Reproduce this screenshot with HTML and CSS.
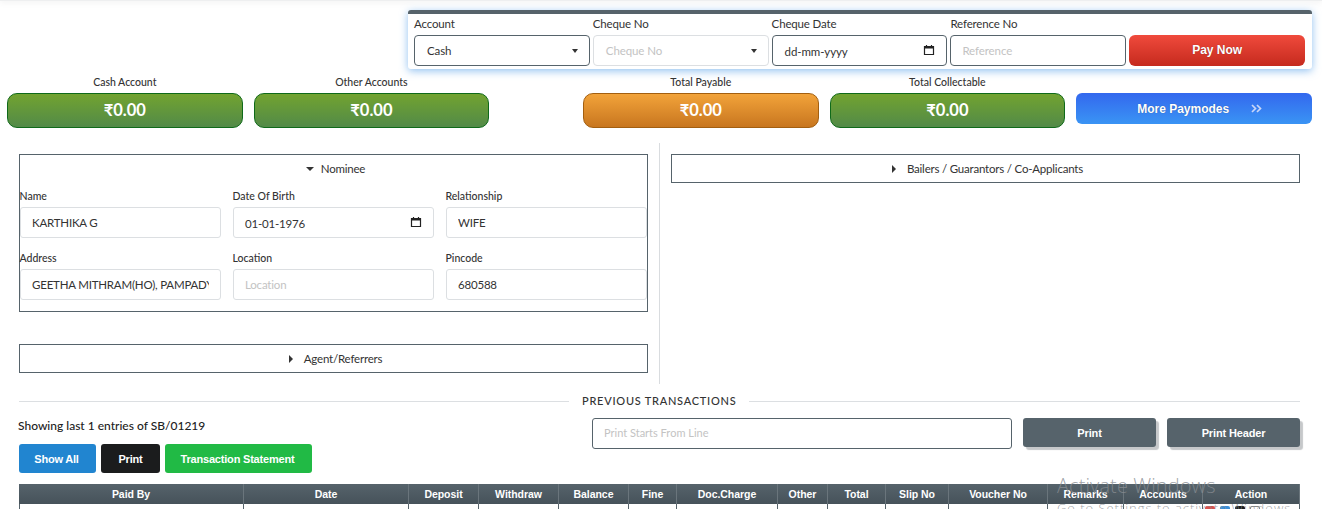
FILE: index.html
```html
<!DOCTYPE html>
<html lang="en">
<head>
<meta charset="utf-8">
<title>Payment</title>
<link rel="stylesheet" href="styles.css">
</head>
<body>
<div class="page">
  <div class="topshade"></div>
  <section class="paybar">
    <div class="pay-col"><label>Account</label><div class="ctl ctl-dark ctl-sel"><span>Cash</span><i class="caret"></i></div></div>
    <div class="pay-col"><label>Cheque No</label><div class="ctl ctl-light ctl-sel"><span class="ph">Cheque No</span><i class="caret"></i></div></div>
    <div class="pay-col"><label>Cheque Date</label><div class="ctl ctl-dark ctl-sel"><span class="date">dd-mm-yyyy</span>
      <svg class="cal" viewBox="0 0 12 12"><path d="M1.5 2.5h9v8h-9z M3.5 1v1.5 M8.5 1v1.5" fill="none" stroke="#222" stroke-width="1.2"/><path d="M1.5 2.5h9v2h-9z" fill="#222"/></svg></div></div>
    <div class="pay-col"><label>Reference No</label><input class="ctl ctl-dark" placeholder="Reference"></div>
    <button class="paynow">Pay Now</button>
  </section>

  <section class="summary">
    <div class="sum"><div class="sum-label">Cash Account</div><div class="amount green">₹0.00</div></div>
    <div class="sum"><div class="sum-label">Other Accounts</div><div class="amount green">₹0.00</div></div>
    <div class="sum-gap"></div>
    <div class="sum"><div class="sum-label">Total Payable</div><div class="amount orange">₹0.00</div></div>
    <div class="sum"><div class="sum-label">Total Collectable</div><div class="amount green">₹0.00</div></div>
    <div class="sum"><div class="sum-label">&nbsp;</div><button class="more"><span>More Paymodes</span>
      <svg class="chev" viewBox="0 0 11 9"><path d="M1 1l3.5 3.5-3.5 3.5 M6 1l3.5 3.5-3.5 3.5" fill="none" stroke="#c9d6f8" stroke-width="1.7"/></svg></button></div>
  </section>

  <section class="panels">
    <div class="panel-left">
      <div class="box">
        <div class="box-title"><i class="caret"></i>Nominee</div>
        <div class="form-grid">
          <div class="fld"><label>Name</label><input class="inp" value="KARTHIKA G"></div>
          <div class="fld"><label>Date Of Birth</label><div class="inp inp-date"><span class="dob">01-01-1976</span>
            <svg class="cal" viewBox="0 0 12 12"><path d="M1.5 2.5h9v8h-9z M3.5 1v1.5 M8.5 1v1.5" fill="none" stroke="#222" stroke-width="1.2"/><path d="M1.5 2.5h9v2h-9z" fill="#222"/></svg></div></div>
          <div class="fld"><label>Relationship</label><input class="inp" value="WIFE"></div>
          <div class="fld"><label>Address</label><input class="inp" value="GEETHA MITHRAM(HO), PAMPADY"></div>
          <div class="fld"><label>Location</label><input class="inp" placeholder="Location"></div>
          <div class="fld"><label>Pincode</label><input class="inp" value="680588"></div>
        </div>
      </div>
      <div class="box box-agent"><div class="box-title"><i class="caret caret-r"></i>Agent/Referrers</div></div>
    </div>
    <div class="panel-right">
      <div class="box"><div class="box-title"><i class="caret caret-r"></i>Bailers / Guarantors / Co-Applicants</div></div>
    </div>
  </section>

  <section class="prev">
    <div class="prev-head"><span>PREVIOUS TRANSACTIONS</span></div>
    <div class="prev-row">
      <div class="prev-left">
        <div class="showing">Showing last 1 entries of SB/01219</div>
        <div class="btns">
          <button class="btn b-blue">Show All</button>
          <button class="btn b-black">Print</button>
          <button class="btn b-green">Transaction Statement</button>
        </div>
      </div>
      <div class="prev-right">
        <input class="line-input" placeholder="Print Starts From Line">
        <button class="btn-slate b-print">Print</button>
        <button class="btn-slate b-header">Print Header</button>
      </div>
    </div>
    <table class="tx">
      <colgroup>
        <col class="c1"><col class="c2"><col class="c3"><col class="c4"><col class="c5"><col class="c6"><col class="c7"><col class="c8"><col class="c9"><col class="c10"><col class="c11"><col class="c12"><col class="c13"><col class="c14">
      </colgroup>
      <thead><tr><th>Paid By</th><th>Date</th><th>Deposit</th><th>Withdraw</th><th>Balance</th><th>Fine</th><th>Doc.Charge</th><th>Other</th><th>Total</th><th>Slip No</th><th>Voucher No</th><th>Remarks</th><th>Accounts</th><th>Action</th></tr></thead>
      <tbody><tr><td></td><td></td><td></td><td></td><td></td><td></td><td></td><td></td><td></td><td></td><td></td><td></td><td></td><td>
        <span class="acts"><i class="a a-red"></i><i class="a a-blue"></i><i class="a a-black"></i><i class="a a-grey"></i></span>
      </td></tr></tbody>
    </table>
  </section>

  <div class="watermark"><div class="wm1">Activate Windows</div><div class="wm2">Go to Settings to activate Windows.</div></div>
</div>
</body>
</html>
```
FILE: styles.css
```css
* { box-sizing: border-box; }
html, body { margin: 0; padding: 0; height: 509px; overflow: hidden; background: #fff; }
body { font-family: Lato, "Liberation Sans", sans-serif; color: #333; font-size: 12px; }
.page { position: relative; width: 1322px; height: 509px; overflow: hidden; }
.topshade { height: 1px; background: #eeeff0; box-shadow: 0 0 6px rgba(0,0,0,.25); }

.paybar { margin: 9px 0 0 408px; width: 904px; height: 59px; background: #fff; border-top: 4px solid #56636b; border-radius: 3px;
  box-shadow: 0 2px 8px rgba(70,150,230,.6); display: flex; gap: 3px; padding: 0 6px; align-items: flex-start; }
.pay-col { width: 175.8px; flex: none; }
.pay-col label { display: block; font-size: 11.5px; letter-spacing: -.15px; line-height: 16px; margin-top: 2px; margin-bottom: 3px; color: #333; }
.ctl { display: flex; align-items: center; width: 100%; height: 31px; border-radius: 4px; background: #fff; font: 11.5px Lato, sans-serif; letter-spacing: -.1px; padding: 0 12px; color: #333; outline: 0; }
input.ctl { padding-left: 11px; }
.ctl-dark { border: 1px solid #56636b; }
.ctl-light { border: 1px solid #dcdfe2; }
.ctl-sel { justify-content: space-between; }
.ctl::placeholder, .inp::placeholder, .line-input::placeholder { color: #c3c3c3; opacity: 1; }
.ph { color: #c3c3c3; }
.date { margin-top: 1px; }
.caret { display: inline-block; width: 0; height: 0; border-left: 4px solid transparent; border-right: 4px solid transparent; border-top: 4px solid #333; }
.ctl .caret { margin-right: -1px; border-left-width: 3.5px; border-right-width: 3.5px; }
.caret-r { border-top: 4px solid transparent; border-bottom: 4px solid transparent; border-left: 4px solid #333; border-right: 0; margin-right: 4px; }
.cal { width: 12px; height: 12px; margin-right: -1px; margin-top: -2px; flex: none; }
.paynow { flex: none; width: 176px; height: 31px; margin-top: 21px; border: 0; border-radius: 6px; color: #fff; font: bold 12px "Liberation Sans", sans-serif;
  background: linear-gradient(#f04a3c, #c52a1e); text-shadow: 0 0 1px rgba(0,0,0,.4); padding-bottom: 3px; }

.summary { display: flex; margin: 7px 0 0 7px; width: 1305px; gap: 11px; align-items: flex-start; }
.sum { width: 235.6px; flex: none; }
.sum-gap { width: 71.8px; flex: none; }
.sum-label { text-align: center; font-size: 10.5px; line-height: 12px; height: 12px; margin-bottom: 5px; color: #333; font-weight: 500; }
.amount { height: 35px; border-radius: 10px; text-align: center; color: #fff; font: bold 16.5px/33px Lato, sans-serif; }
.green { background: linear-gradient(#72a330, #528a48); border: 1px solid #0f6a1a; }
.orange { background: linear-gradient(#f2a33a, #c8761f); border: 1px solid #a35f10; }
.more { width: 236px; height: 31px; border: 0; border-radius: 6px; background: linear-gradient(#3368ee, #3a94f4); color: #fff; font: bold 12px "Liberation Sans", sans-serif;
  display: flex; align-items: center; justify-content: flex-start; padding: 0 0 0 61px; text-shadow: 0 0 1px rgba(0,0,0,.4); }
.chev { width: 11px; height: 9px; margin-left: 22px; }

.panels { display: flex; margin: 15px 0 0 0; height: 241px; padding-left: 19px; }
.panel-left { width: 641px; padding-top: 11px; padding-right: 11px; border-right: 1px solid #d9dcdf; flex: none; }
.panel-right { width: 640px; padding: 11px 0 0 11px; flex: none; }
.box { border: 1px solid #56636b; }
.box-agent { margin-top: 32px; }
.box-title { height: 27px; display: flex; align-items: center; justify-content: center; gap: 7px; font-size: 11.5px; letter-spacing: -.2px; color: #333; padding-left: 4px; }
.form-grid { display: grid; grid-template-columns: repeat(3, 201px); column-gap: 12px; padding-bottom: 11px; padding-top: 1px; }
.fld label { display: block; font-size: 10.5px; line-height: 13px; margin: 7px 0 4px -.5px; color: #333; font-weight: 500; }
.fld:nth-child(n+4) label { margin-top: 14px; }
.inp { display: flex; align-items: center; justify-content: space-between; width: 201px; height: 31px; border: 1px solid #dcdfe2; border-radius: 3px; background: #fff; padding: 0 11px; font: 11.5px Lato, sans-serif; letter-spacing: -.2px; color: #333; outline: 0; }
.inp-date { padding-right: 12px; }
.dob { margin-top: 2px; }

.prev { margin: 0; padding: 0 22px 0 19px; }
.prev-head { display: flex; align-items: center; margin-top: 7px; height: 18px; gap: 13px; font-size: 11px; font-weight: 500; letter-spacing: .75px; color: #333; }
.prev-head::before, .prev-head::after { content: ""; flex: 1; height: 1px; background: #dcdfe2; margin-top: 2px; }
.prev-head::before { flex: none; width: 550px; }
.prev-row { display: flex; justify-content: space-between; margin-top: 1px; }
.showing { font-size: 12px; font-weight: 500; line-height: 14px; margin-top: 9px; margin-left: -1px; color: #222; }
.btns { display: flex; gap: 5px; margin-top: 11px; }
.btn { height: 29px; border: 0; border-radius: 3px; color: #fff; font: bold 11px "Liberation Sans", sans-serif; letter-spacing: -.2px; padding: 0; }
.b-blue { width: 77px; background: #2185d0; padding-right: 2px; }
.b-black { width: 59px; background: #1b1c1d; }
.b-green { width: 147px; background: #21ba45; padding-right: 2px; }
.prev-right { display: flex; margin-top: 8px; align-items: flex-start; }
.line-input { width: 420px; height: 31px; border: 1px solid #56636b; border-radius: 3px; padding: 0 11px 2px; font: 11px Lato, sans-serif; outline: 0; margin-right: 11px; }
.btn-slate { height: 29px; border: 0; border-radius: 3px; background: #56636b; color: #fff; font: bold 11px "Liberation Sans", sans-serif; letter-spacing: -.15px; box-shadow: 3px 3px 1px #c6c8ca; }
.b-print { width: 133px; margin-right: 11px; }
.b-header { width: 133px; }

.tx { width: 1281px; table-layout: fixed; border-collapse: separate; border-spacing: 0; margin-top: 11px; font-family: "Liberation Sans", sans-serif; }
.c1 { width: 225px; } .c2 { width: 165px; } .c3 { width: 70px; } .c4 { width: 80px; } .c5 { width: 70px; } .c6 { width: 48px; } .c7 { width: 101px; } .c8 { width: 50px; } .c9 { width: 58px; } .c10 { width: 63px; } .c11 { width: 99px; } .c12 { width: 76px; } .c13 { width: 79px; } .c14 { width: 97px; }
.tx th { height: 20px; padding: 0; color: #fff; font-size: 10.5px; font-weight: bold; letter-spacing: -.05px; background: linear-gradient(#56636b, #46525a); border-right: 1px solid #6a757c; }
.tx td { height: 30px; border-right: 1px solid #56636b; padding: 0; vertical-align: top; }
.tx td:first-child { border-left: 1px solid #56636b; }
.acts { display: flex; gap: 5px; padding: 2px 0 0 2px; }
.a { width: 10px; height: 8px; border-radius: 2px; display: block; }
.a-red { background: #d9534f; } .a-blue { background: #3b8fd8; } .a-black { background: #1b1c1d; } .a-grey { background: #fff; border: 1px solid #888; }

.watermark { position: absolute; left: 1057px; top: 474px; color: rgba(135,140,145,.8); font-family: "Open Sans", sans-serif; font-weight: 300; white-space: nowrap; pointer-events: none; }
.wm1 { font-size: 20px; line-height: 24px; letter-spacing: .1px; }
.wm2 { font-size: 13px; line-height: 18px; margin-top: 1px; letter-spacing: .95px; }
```
